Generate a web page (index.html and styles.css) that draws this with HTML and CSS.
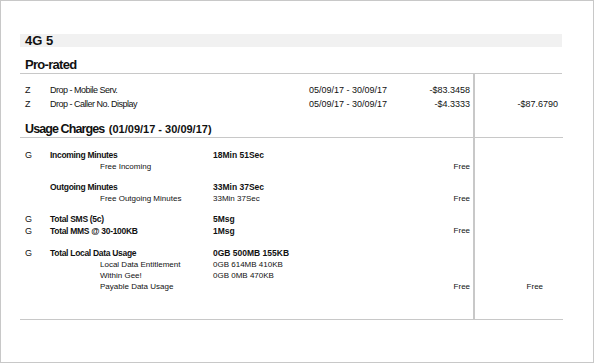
FILE: index.html
```html
<!DOCTYPE html>
<html>
<head>
<meta charset="utf-8">
<link rel="stylesheet" href="styles.css">
</head>
<body>
<div class="frame">
  <div class="bar"><span class="bar-title">4G 5</span></div>
  <h2 class="sec-title">Pro-rated</h2>
  <table class="bill">
    <colgroup>
      <col class="c-code"><col class="c-desc"><col class="c-val"><col class="c-date"><col class="c-amt"><col class="c-tot">
    </colgroup>
    <tr class="gap"><td colspan="5" class="g9"></td><td class="tot"></td></tr>
    <tr class="pr">
      <td>Z</td><td class="txt">Drop - Mobile Serv.</td><td></td><td>05/09/17 - 30/09/17</td><td class="amt">-$83.3458</td><td class="tot"></td>
    </tr>
    <tr class="pr">
      <td>Z</td><td class="txt">Drop - Caller No. Display</td><td></td><td>05/09/17 - 30/09/17</td><td class="amt">-$4.3333</td><td class="tot">-$87.6790</td>
    </tr>
    <tr class="uhead">
      <td colspan="5"><span class="uh-main">Usage Charges</span> <span class="uh-sub">(01/09/17 - 30/09/17)</span></td><td class="tot"></td>
    </tr>
    <tr class="gap"><td colspan="5" class="g12"></td><td class="tot"></td></tr>
    <tr class="ln b"><td class="n">G</td><td class="txt">Incoming Minutes</td><td>18Min 51Sec</td><td></td><td></td><td class="tot"></td></tr>
    <tr class="ln"><td></td><td class="sub">Free Incoming</td><td></td><td></td><td class="amt">Free</td><td class="tot"></td></tr>
    <tr class="gap"><td colspan="5" class="g9"></td><td class="tot"></td></tr>
    <tr class="ln b"><td></td><td class="txt">Outgoing Minutes</td><td>33Min 37Sec</td><td></td><td></td><td class="tot"></td></tr>
    <tr class="ln"><td></td><td class="sub">Free Outgoing Minutes</td><td>33Min 37Sec</td><td></td><td class="amt">Free</td><td class="tot"></td></tr>
    <tr class="gap"><td colspan="5" class="g9"></td><td class="tot"></td></tr>
    <tr class="ln b"><td class="n">G</td><td class="txt">Total SMS (5c)</td><td>5Msg</td><td></td><td></td><td class="tot"></td></tr>
    <tr class="ln b"><td class="n">G</td><td class="txt">Total MMS @ 30-100KB</td><td>1Msg</td><td></td><td class="amt n">Free</td><td class="tot"></td></tr>
    <tr class="gap"><td colspan="5" class="g10"></td><td class="tot"></td></tr>
    <tr class="ln b"><td class="n">G</td><td class="txt">Total Local Data Usage</td><td>0GB 500MB 155KB</td><td></td><td></td><td class="tot"></td></tr>
    <tr class="ln"><td></td><td class="sub">Local Data Entitlement</td><td>0GB 614MB 410KB</td><td></td><td></td><td class="tot"></td></tr>
    <tr class="ln"><td></td><td class="sub">Within Gee!</td><td>0GB 0MB 470KB</td><td></td><td></td><td class="tot"></td></tr>
    <tr class="ln"><td></td><td class="sub">Payable Data Usage</td><td></td><td></td><td class="amt">Free</td><td class="tot free">Free</td></tr>
    <tr class="gap last"><td colspan="5" class="g27"></td><td class="tot"></td></tr>
  </table>
</div>
</body>
</html>
```

FILE: styles.css
```css
* { box-sizing: border-box; }
html, body { margin: 0; padding: 0; background: #fff; }
body {
  font-family: "Liberation Sans", Arial, sans-serif;
  color: #111;
}
.frame {
  width: 594px;
  height: 363px;
  border: 1px solid #c8c8c8;
  padding: 33px 31px 0 19px;
}
.bar {
  height: 13px;
  background-color: #f1f1f1;
  background-image: radial-gradient(#e2e2e2 0.6px, transparent 0.8px);
  background-size: 6px 4px;
  display: flex;
  align-items: center;
  padding-left: 5px;
}
.bar-title {
  font-weight: bold;
  font-size: 13px;
  line-height: 13px;
}
.sec-title {
  margin: 10px 0 0 0;
  padding: 0 0 0 5px;
  font-size: 13px;
  line-height: 16px;
  font-weight: bold;
  letter-spacing: -0.7px;
  border-bottom: 1px solid #c8c8c8;
}
.bill {
  width: 543px;
  border-collapse: collapse;
  table-layout: fixed;
  font-size: 9px;
}
.c-code { width: 25px; }
.c-desc { width: 163px; }
.c-val { width: 96px; }
.c-date { width: 100px; }
.c-amt { width: 70px; }
.c-tot { width: 89px; }
.bill td {
  padding: 0 0 0 5px;
  white-space: nowrap;
  vertical-align: middle;
}
.bill td.tot {
  border-left: 2px solid #c8c8c8;
  text-align: right;
  padding-right: 5px;
}
.bill td.tot.free { padding-right: 20px; font-size: 8px; }
.bill td.amt { text-align: right; padding-right: 3px; }
.g9 { height: 9px; }
.g10 { height: 10px; }
.g12 { height: 12px; }
.g27 { height: 27px; }
.pr td { height: 14px; line-height: 14px; }
.pr td.txt { letter-spacing: -0.5px; }
.ln td { height: 11px; line-height: 11px; font-size: 8px; }
.ln td.n { font-size: 9px; }
.ln td.amt { font-size: 8px; }
.ln.b td { height: 12px; line-height: 12px; font-weight: bold; font-size: 8.5px; }
.ln.b td.txt { letter-spacing: -0.3px; }
.ln.b td.n { font-weight: normal; font-size: 9px; }
.ln.b td.amt { font-weight: normal; font-size: 8px; }
.ln td.sub { padding-left: 55px; }
.uhead td {
  height: 26px;
  vertical-align: bottom;
  line-height: 14px;
  padding-bottom: 0;
  border-bottom: 1px solid #c8c8c8;
  font-weight: bold;
}
.uh-main { font-size: 12.5px; letter-spacing: -0.9px; }
.uh-sub { font-size: 11px; margin-left: 2px; }
.gap.last td { border-bottom: 1px solid #c8c8c8; }
```
